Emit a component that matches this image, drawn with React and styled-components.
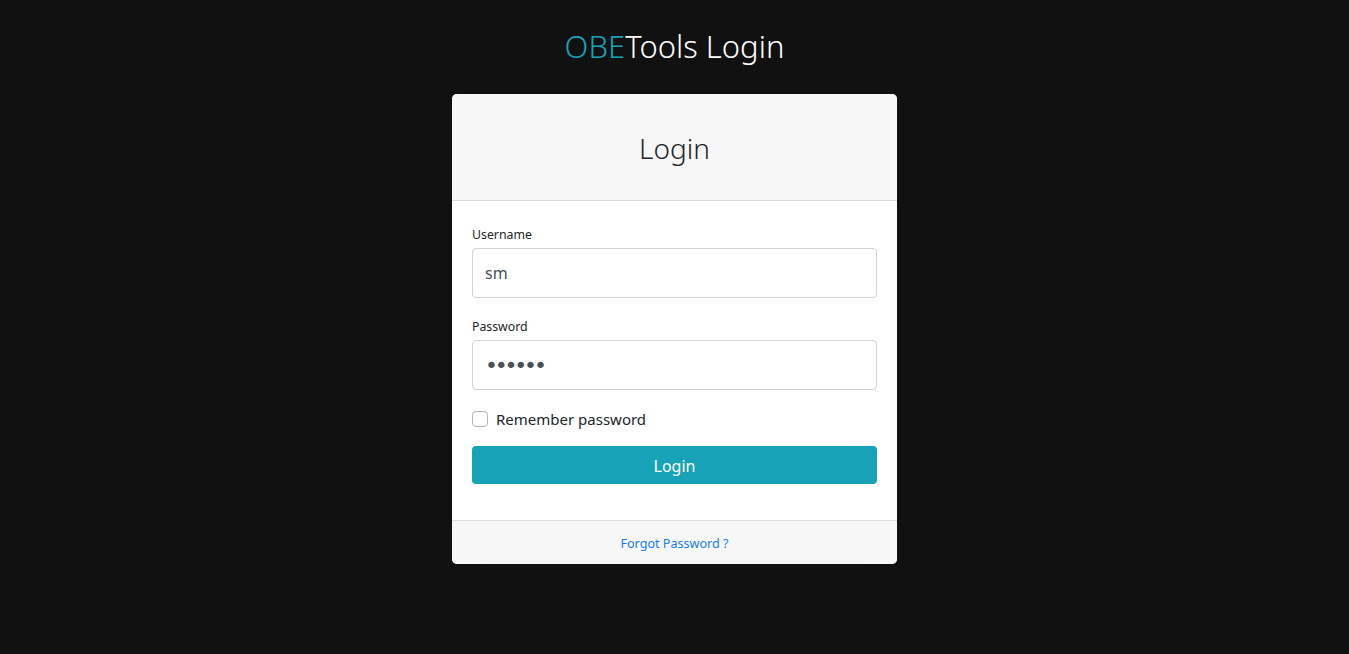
import React from 'react'
import styled, { createGlobalStyle } from 'styled-components'

const Global = createGlobalStyle`
  html, body { margin:0; padding:0; background:#111111; }
  body { font-family:"Noto Sans","Open Sans",sans-serif; color:#212529; }
  * { box-sizing:border-box; }
`

export default function App() {
  return (
    <>
      <Global />
      <Page>
        <Brand><Accent>OBE</Accent>Tools Login</Brand>
        <Card>
          <CardHeader>
            <HeaderTitle>Login</HeaderTitle>
          </CardHeader>
          <CardBody>
            <Group>
              <Label>Username</Label>
              <Input type="text" defaultValue="sm" />
            </Group>
            <Group>
              <Label>Password</Label>
              <Input type="password" defaultValue="secret" secret />
            </Group>
            <Check>
              <CheckBox type="checkbox" />
              <CheckLabel>Remember password</CheckLabel>
            </Check>
            <Button>Login</Button>
          </CardBody>
          <CardFooter>
            <Link href="#">Forgot Password ?</Link>
          </CardFooter>
        </Card>
      </Page>
    </>
  )
}

const Page = styled.div`
display:flex;
flex-direction:column;
align-items:center;
padding-top:27px;
min-height:654px;
`
const Brand = styled.h2`
margin:0 0 29px;
font-size:31px;
font-weight:300;
line-height:38px;
color:#ffffff;
`
const Accent = styled.span`
color:#17a2b8;
`
const Card = styled.div`
width:445px;
background:#fff;
border-radius:5px;
overflow:hidden;
box-shadow:0 16px 48px rgba(255,255,255,0.012);
`
const CardHeader = styled.div`
background:#f7f7f7;
border-bottom:1px solid #dcdcdc;
padding:12px 20px;
text-align:center;
`
const HeaderTitle = styled.h3`
margin:25px 0 23px;
font-size:28px;
font-weight:300;
line-height:34px;
color:#212529;
`
const CardBody = styled.div`
padding:25px 20px 36px;
`
const Group = styled.div`
margin-bottom:20px;
`
const Label = styled.label`
display:block;
font-size:12.3px;
line-height:18px;
margin-bottom:4px;
color:#212529;
`
const Input = styled.input`
display:block;
width:100%;
height:50px;
padding:0 12px;
font-family:${p => p.secret ? '"DejaVu Sans", sans-serif' : 'inherit'};
font-size:${p => p.secret ? '22px' : '16px'};
letter-spacing:${p => p.secret ? '-3.2px' : 'normal'};
color:#495057;
border:1px solid #ced4da;
border-radius:4px;
background:#fff;
outline:none;
`
const Check = styled.div`
display:flex;
align-items:center;
gap:8px;
margin-top:-3px;
margin-bottom:15px;
`
const CheckBox = styled.input`
appearance:none;
width:16px;
height:16px;
margin:0;
border:1px solid #adb5bd;
border-radius:4px;
background:#fff;
`
const CheckLabel = styled.span`
font-size:15px;
line-height:24px;
`
const Button = styled.button`
display:block;
width:100%;
height:38px;
border:none;
border-radius:4px;
background:#17a2b8;
color:#fff;
font-family:inherit;
font-size:16px;
line-height:38px;
`
const CardFooter = styled.div`
background:#f7f7f7;
border-top:1px solid #dcdcdc;
padding:13px 20px 11px;
text-align:center;
font-size:12.6px;
line-height:19px;
`
const Link = styled.a`
color:#1a7cf5;
text-decoration:none;
`
